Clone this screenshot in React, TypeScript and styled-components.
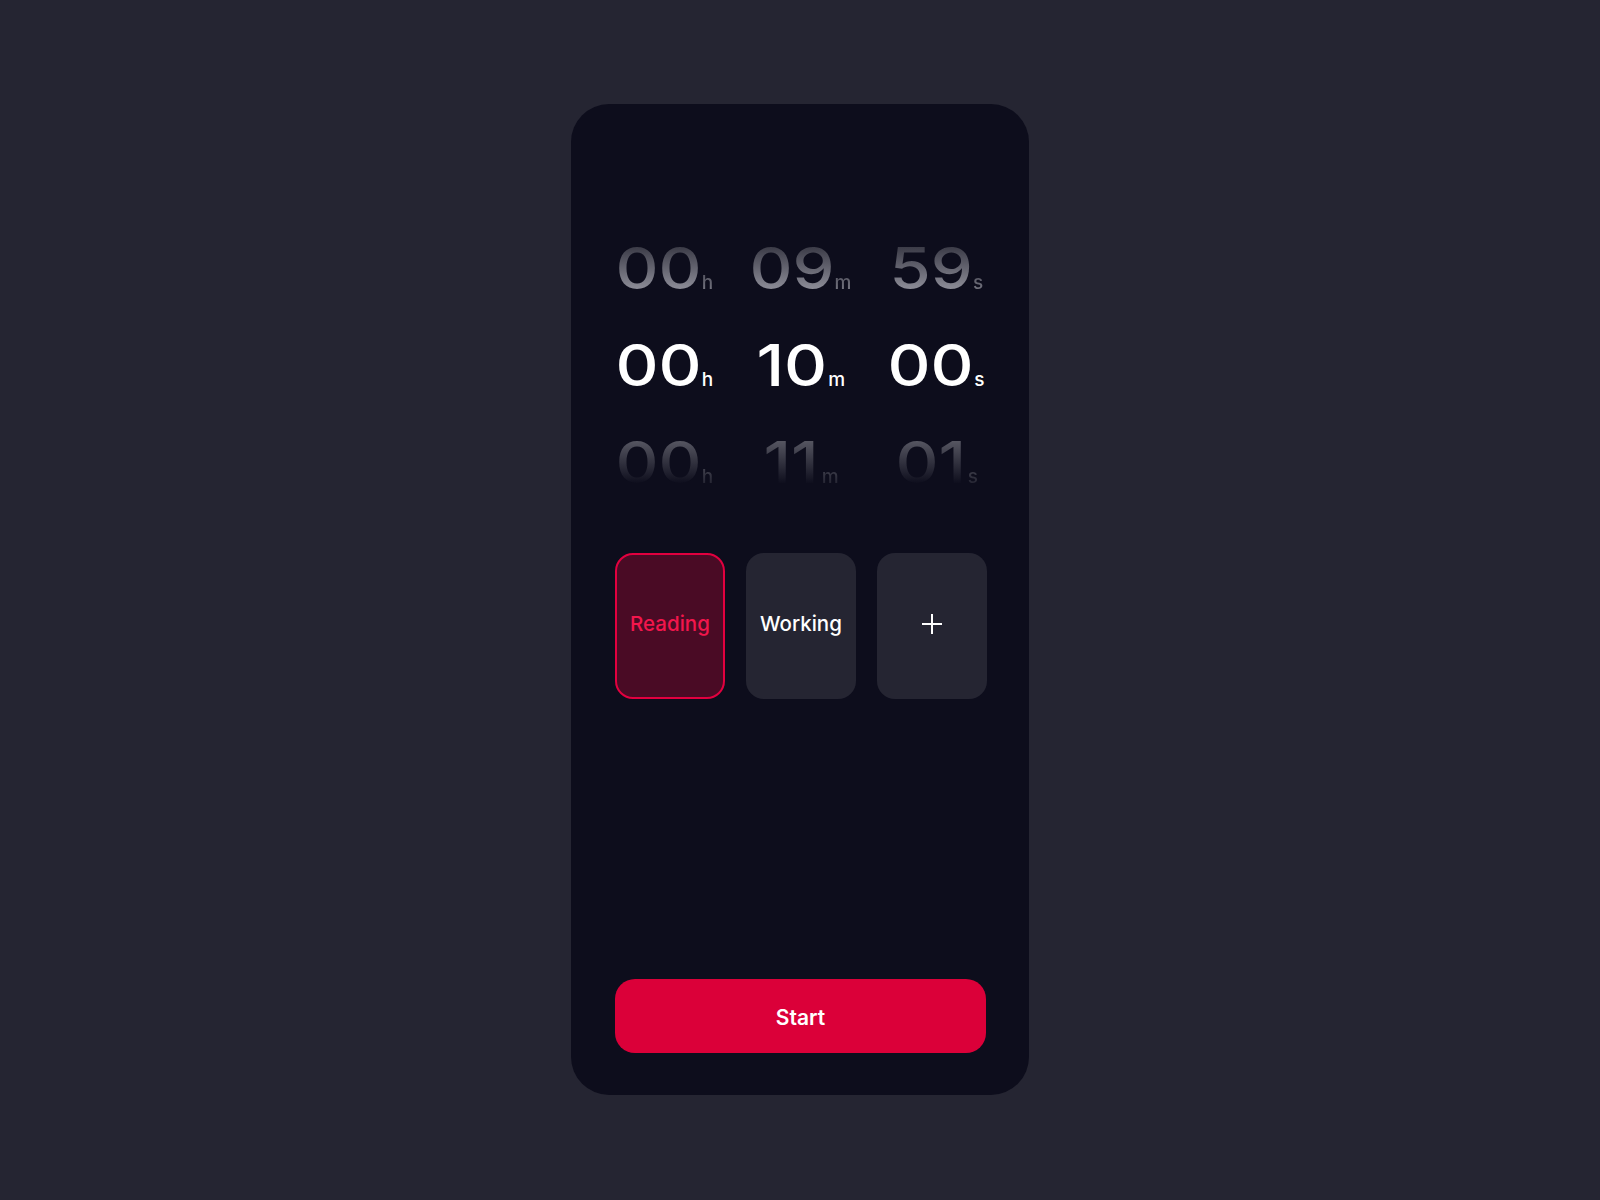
import React from 'react'
import styled, { createGlobalStyle, css } from 'styled-components'

const GlobalStyle = createGlobalStyle`
  body {
    margin: 0;
    background: #252532;
    font-family: Inter, "Noto Sans", sans-serif;
  }
`

const Page = styled.div`
  min-height: 1200px;
  display: flex;
  justify-content: center;
  align-items: flex-start;
`

const Phone = styled.div`
  margin-top: 104px;
  width: 458px;
  height: 991px;
  box-sizing: border-box;
  padding: 116px 43px 42px 44px;
  background: #0d0d1c;
  border-radius: 38px;
  display: flex;
  flex-direction: column;
`

const Picker = styled.div`
  display: grid;
  grid-template-columns: repeat(3, 136px);
  justify-content: center;
  margin: 0 -18px;
`

type Tone = 'prev' | 'current' | 'next'

const toneStyles = {
  prev: css`
    background: linear-gradient(to bottom, #383844 26%, #8e8e99 72%);
    -webkit-background-clip: text;
    background-clip: text;
    color: transparent;
  `,
  current: css`
    color: #ffffff;
  `,
  next: css`
    background: linear-gradient(to bottom, #5c5c67 24%, #0d0d1c 72%);
    -webkit-background-clip: text;
    background-clip: text;
    color: transparent;
  `,
}

const Cell = styled.div`
  height: 97px;
  display: flex;
  justify-content: center;
  align-items: baseline;
  white-space: nowrap;
`

const Digits = styled.span<{ $tone: Tone }>`
  display: inline-block;
  height: 97px;
  line-height: 97px;
  font-size: 58px;
  font-weight: 500;
  margin: 0 5px;
  transform: scaleX(1.15);
  ${({ $tone }) => toneStyles[$tone]}
`

const Unit = styled.span<{ $tone: Tone }>`
  display: inline-block;
  height: 97px;
  line-height: 97px;
  font-size: 19px;
  font-weight: 500;
  margin-left: 1px;
  ${({ $tone }) => toneStyles[$tone]}
`

const Chips = styled.div`
  margin-top: 42px;
  display: grid;
  grid-template-columns: repeat(3, 110px);
  column-gap: 21px;
`

const Chip = styled.button<{ $active?: boolean }>`
  height: 146px;
  border-radius: 18px;
  border: 2px solid ${({ $active }) => ($active ? '#e2003f' : 'transparent')};
  background: ${({ $active }) => ($active ? '#4a0b25' : '#252532')};
  color: ${({ $active }) => ($active ? '#f2164c' : '#ffffff')};
  font-family: Inter, "Noto Sans", sans-serif;
  font-size: 20.5px;
  font-weight: 500;
  display: flex;
  align-items: center;
  justify-content: center;
  padding: 0 0 5px;
  cursor: pointer;
`

const Spacer = styled.div`
  flex: 1;
`

const StartButton = styled.button`
  height: 74px;
  border: none;
  border-radius: 20px;
  background: #db0039;
  color: #ffffff;
  font-family: Inter, "Noto Sans", sans-serif;
  font-size: 21px;
  font-weight: 600;
  padding-top: 3px;
  cursor: pointer;
`

const rows: { tone: Tone; values: [string, string][] }[] = [
  { tone: 'prev', values: [['00', 'h'], ['09', 'm'], ['59', 's']] },
  { tone: 'current', values: [['00', 'h'], ['10', 'm'], ['00', 's']] },
  { tone: 'next', values: [['00', 'h'], ['11', 'm'], ['01', 's']] },
]

const PlusIcon = () => (
  <svg width="22" height="22" viewBox="0 0 22 22" fill="none">
    <path d="M11 1v20M1 11h20" stroke="#ffffff" strokeWidth="2" />
  </svg>
)

export default function App() {
  return (
    <Page>
      <GlobalStyle />
      <Phone>
        <Picker>
          {rows.map((row) =>
            row.values.map(([num, unit], i) => (
              <Cell key={row.tone + i}>
                <Digits $tone={row.tone}>{num}</Digits>
                <Unit $tone={row.tone}>{unit}</Unit>
              </Cell>
            ))
          )}
        </Picker>
        <Chips>
          <Chip $active>Reading</Chip>
          <Chip>Working</Chip>
          <Chip>
            <PlusIcon />
          </Chip>
        </Chips>
        <Spacer />
        <StartButton>Start</StartButton>
      </Phone>
    </Page>
  )
}
